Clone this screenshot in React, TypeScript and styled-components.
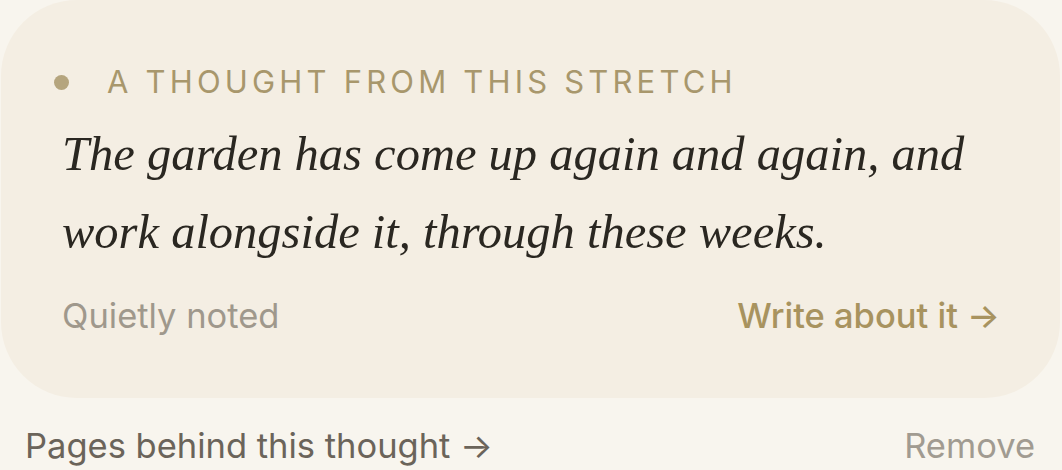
import React from 'react'
import styled, { createGlobalStyle } from 'styled-components'

const GlobalStyle = createGlobalStyle`
  html, body {
    margin: 0;
    padding: 0;
    background: #f8f5ee;
  }
  body {
    font-family: Inter, "Noto Sans", sans-serif;
    -webkit-font-smoothing: antialiased;
  }
`

const Page = styled.div`
  width: 1062px;
  height: 470px;
  overflow: hidden;
  display: flex;
  flex-direction: column;
`

const Card = styled.section`
  margin: 0 2px 0 1px;
  height: 398px;
  box-sizing: border-box;
  padding: 62px 60px 0 61px;
  background: #f4eee3;
  border-radius: 76px;
  display: flex;
  flex-direction: column;
`

const Eyebrow = styled.div`
  display: flex;
  align-items: center;
  gap: 38px;
  margin-left: -8px;
  font-size: 31px;
  line-height: 40px;
  letter-spacing: 0.135em;
  color: #a8976c;
  text-transform: uppercase;
`

const Dot = styled.span`
  width: 15px;
  height: 15px;
  border-radius: 50%;
  background: #b5a57e;
  flex: none;
`

const Quote = styled.p`
  margin: 13px 0 0;
  font-family: "Liberation Serif", "Times New Roman", serif;
  font-style: italic;
  font-size: 48.5px;
  line-height: 78px;
  color: #2a2721;
`

const CardFooter = styled.div`
  margin-top: 25px;
  display: flex;
  justify-content: space-between;
  align-items: baseline;
  font-size: 34.5px;
  line-height: 40px;
`

const Muted = styled.span`
  color: #9f988c;
`

const Action = styled.a<{ $tone: 'gold' | 'dark' | 'muted' }>`
  font-weight: ${p => (p.$tone === 'gold' ? 500 : 400)};
  color: ${p => (p.$tone === 'gold' ? '#a8935f' : p.$tone === 'dark' ? '#6b645a' : '#a19b91')};
  text-decoration: none;
  cursor: pointer;
`

const BelowRow = styled.div`
  display: flex;
  justify-content: space-between;
  align-items: baseline;
  padding: 28px 27px 0 25px;
  font-size: 34.5px;
  line-height: 40px;
`

export default function App() {
  return (
    <Page>
      <GlobalStyle />
      <Card>
        <Eyebrow>
          <Dot />
          <span>A thought from this stretch</span>
        </Eyebrow>
        <Quote>
          The garden has come up again and again, and work alongside it, through these weeks.
        </Quote>
        <CardFooter>
          <Muted>Quietly noted</Muted>
          <Action $tone="gold">Write about it →</Action>
        </CardFooter>
      </Card>
      <BelowRow>
        <Action $tone="dark">Pages behind this thought →</Action>
        <Action $tone="muted">Remove</Action>
      </BelowRow>
    </Page>
  )
}
